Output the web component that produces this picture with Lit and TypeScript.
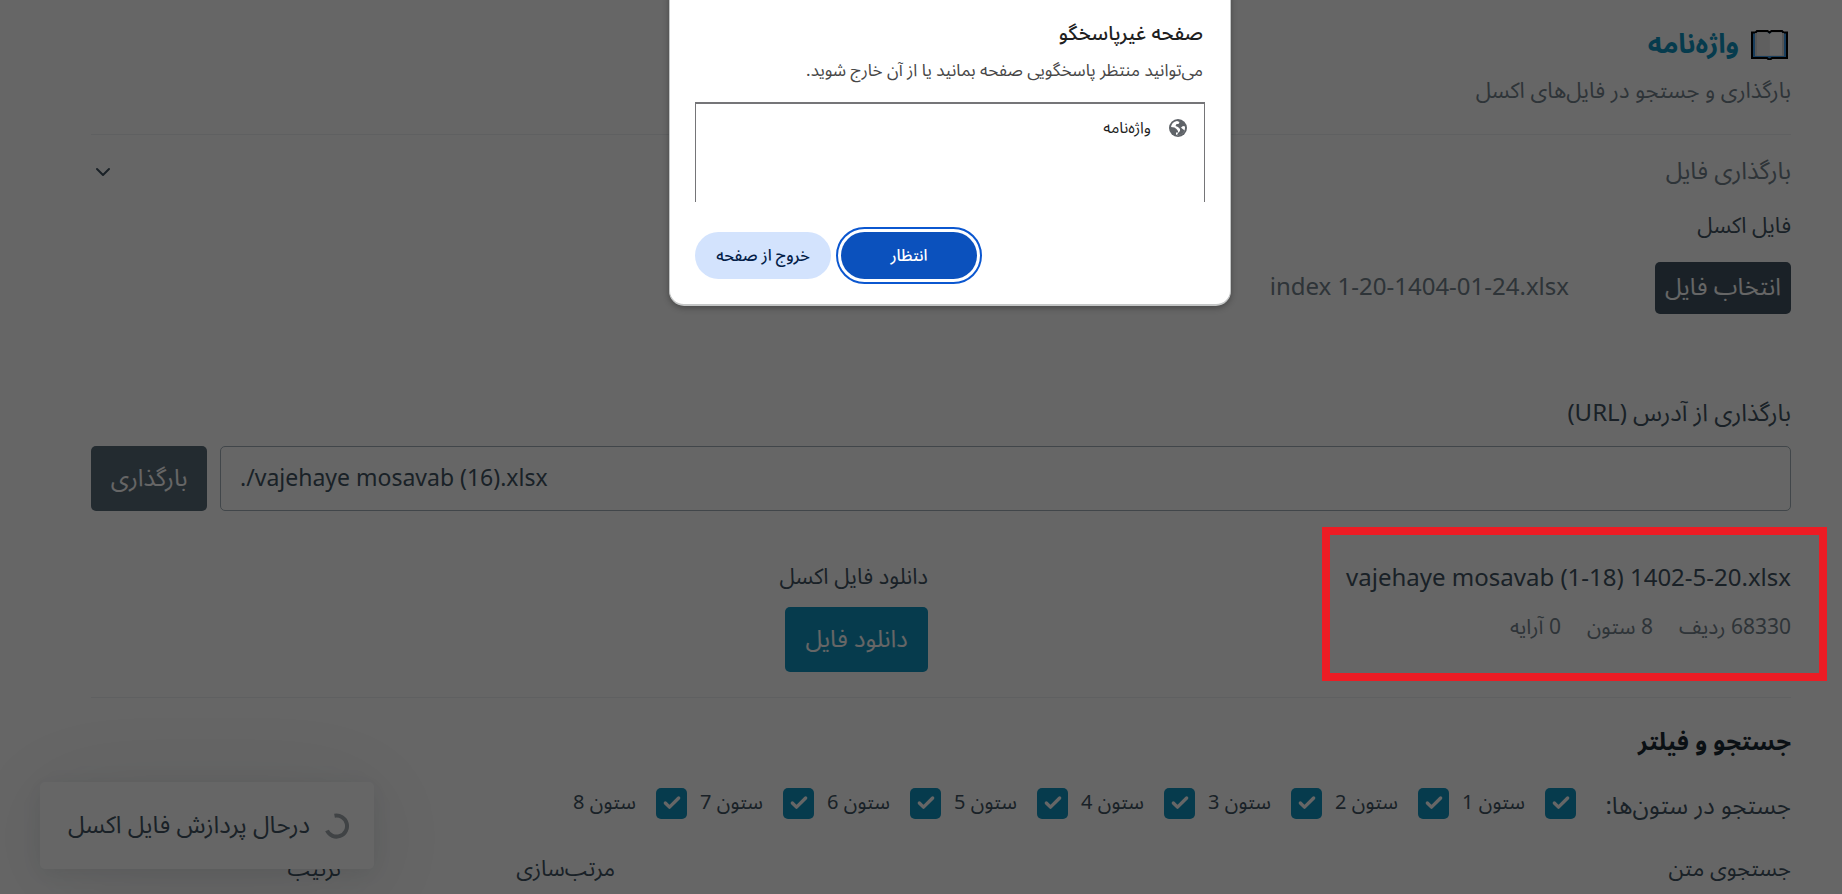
import { LitElement, html, css } from "lit";
import { customElement, state } from "lit/decorators.js";

@customElement("app-root")
export class AppRoot extends LitElement {
  @state() private columns = [1, 2, 3, 4, 5, 6, 7, 8];

  static styles = css`
    :host {
      display: block;
      position: relative;
      height: 100vh;
      overflow: hidden;
      background: #fff;
      color: #415462;
      font-family: "Noto Sans Arabic", "Vazirmatn", "Open Sans", "Noto Sans", "DejaVu Sans", sans-serif;
      font-size: 24px;
      line-height: 32px;
    }
    * { box-sizing: border-box; }
    h1, h2, p { margin: 0; }
    button, input { font: inherit; }
    main { padding: 25px 51px 0 91px; }
    .title {
      display: flex;
      align-items: center;
      gap: 12px;
      padding-right: 3px;
      color: #1095c1;
      font-size: 27px;
      line-height: 40px;
    }
    .book { width: 37px; height: 30px; }
    .tagline { margin-top: 10px; font-size: 22px; color: #73828c; }
    .rule { border: 0; border-top: 1px solid #edf0f3; margin: 27px 0 20px; }
    .summary {
      display: flex;
      justify-content: space-between;
      align-items: center;
      color: #73828c;
      padding: 1px 0;
    }
    .summary svg { width: 24px; height: 24px; color: #415462; }
    .label { display: block; font-size: 22px; }
    .file-label { margin-top: 21px; }
    .file { display: flex; align-items: center; gap: 86px; margin-top: 20px; color: #73828c; }
    .pick {
      height: 52px;
      width: 136px;
      padding: 0;
      border: 0;
      border-radius: 5px;
      background: #415462;
      color: #fff;
    }
    .url-label { display: block; margin-top: 84px; }
    .url { display: flex; gap: 13px; margin-top: 16px; }
    .url input {
      flex: 1;
      min-width: 0;
      height: 65px;
      padding: 0 19px;
      border: 1px solid #a2afb9;
      border-radius: 5px;
      background: #fff;
      color: #415462;
      font-size: 23px;
      direction: ltr;
      text-align: left;
    }
    .action {
      height: 65px;
      padding: 0 20px;
      border: 0;
      border-radius: 5px;
      background: #1095c1;
      color: #fff;
    }
    .load { width: 116px; padding: 0; background: #596b78; }
    .details { display: grid; grid-template-columns: 1fr 1fr; gap: 26px; margin-top: 50px; }
    .details .action { margin-top: 14px; width: 143px; padding: 0; }
    .info { padding-top: 2px; }
    .stats { display: flex; gap: 26px; margin-top: 16px; font-size: 21px; color: #73828c; }
    .rule.low { margin: 25px 0 24px; }
    .heading { color: #1b2832; font-size: 24px; line-height: 42px; }
    .checks { display: flex; align-items: center; margin-top: 19px; height: 40px; }
    .caption { width: 188px; margin-left: 27px; padding-top: 7px; white-space: nowrap; }
    .check {
      display: flex;
      align-items: center;
      gap: 20px;
      width: 127px;
      font-size: 20px;
      white-space: nowrap;
    }
    .check input {
      appearance: none;
      flex: none;
      width: 31px;
      height: 31px;
      margin: 0;
      border-radius: 5px;
      background: #1095c1
        url("data:image/svg+xml,%3Csvg xmlns='http://www.w3.org/2000/svg' viewBox='0 0 24 24' fill='none' stroke='white' stroke-width='4' stroke-linecap='round' stroke-linejoin='round'%3E%3Cpolyline points='20 6 9 17 4 12'/%3E%3C/svg%3E")
        center / 20px no-repeat;
    }
    .fields { display: grid; grid-template-columns: 1fr 250px 250px; gap: 24px; margin-top: 30px; }
    .toast {
      position: absolute;
      left: 40px;
      bottom: 25px;
      display: flex;
      align-items: center;
      gap: 14px;
      width: 334px;
      height: 87px;
      padding: 0 24px;
      border-radius: 5px;
      background: #fff;
      box-shadow: 0 12px 110px rgba(27, 40, 50, 0.1), 0 4px 24px rgba(27, 40, 50, 0.09);
      white-space: nowrap;
    }
    .spinner { width: 26px; height: 26px; flex: none; }
    .shade { position: absolute; inset: 0; background: rgba(0, 0, 0, 0.6); }
    .mark {
      position: absolute;
      right: 15px;
      top: 527px;
      width: 505px;
      height: 154px;
      border: 8px solid #ed1c24;
    }
    .dialog {
      position: absolute;
      left: calc(50% - 252px);
      right: auto;
      top: -16px;
      width: 562px;
      height: 322px;
      margin: 0;
      padding: 34px 25px 26px;
      border: 1px solid #c4c6c6;
      border-bottom-width: 2px;
      border-radius: 15px;
      background: #fff;
      color: #474747;
      font-size: 17px;
      line-height: 24px;
      box-shadow: 0 2px 6px rgba(0, 0, 0, 0.3);
    }
    .dialog h2 { color: #1f1f1f; font-size: 20px; line-height: 30px; font-weight: 500; }
    .dialog p { margin-top: 10px; }
    .dialog h2, .dialog p { padding-right: 2px; }
    .pages {
      display: flex;
      gap: 18px;
      height: 100px;
      margin: 19px 0 30px;
      padding: 12px 17px;
      border: 1px solid #757578;
      border-top: 2px solid #757578;
      border-bottom: 0;
      color: #1f1f1f;
      font-size: 16px;
    }
    .pages svg { width: 18px; height: 18px; margin-top: 3px; }
    .buttons { display: flex; justify-content: flex-end; gap: 10px; }
    .buttons button {
      width: 136px;
      height: 47px;
      padding: 0;
      border: 0;
      border-radius: 24px;
      background: #d3e3fd;
      color: #041e49;
      font-size: 16px;
      font-weight: 500;
    }
    .buttons .wait {
      background: #0b51bd;
      color: #fff;
      outline: 2px solid #0b57d0;
      outline-offset: 3px;
    }
  `;

  render() {
    return html`
      <main dir="rtl">
        <h1 class="title">
          <svg class="book" viewBox="0 0 37 30" aria-hidden="true">
            <path d="M1 2.5H4.500L6 1H16.500L18.500 2.500L20.500 1H31L32.500 2.500H36V28H21L19.500 29.300H17.500L16 28H1Z" fill="#3f9be8" stroke="#000" stroke-width="2"/>
            <path d="M4 3H6L7 2H16L18.500 4L21 2H30L31 3H33V26H4Z" fill="#d8d8d8"/>
            <path d="M6 2.500H16L18.500 4.500V25.500H6Z" fill="#ededed"/>
            <path d="M18.500 4.500L21 2.500H31V25.500H18.500Z" fill="#fff"/>
          </svg>
          <span>واژه‌نامه</span>
        </h1>
        <p class="tagline">بارگذاری و جستجو در فایل‌های اکسل</p>
        <hr class="rule" />
        <div class="summary">
          <span>بارگذاری فایل</span>
          <svg viewBox="0 0 24 24" fill="none" stroke="currentColor" stroke-width="2" stroke-linecap="round" stroke-linejoin="round" aria-hidden="true"><path d="M18 9L12 15L6 9"/></svg>
        </div>
        <label class="label file-label" for="pick">فایل اکسل</label>
        <div class="file">
          <button id="pick" class="pick">انتخاب فایل</button>
          <span dir="ltr">index 1-20-1404-01-24.xlsx</span>
        </div>
        <label class="url-label" for="url">بارگذاری از آدرس (URL)</label>
        <div class="url">
          <input id="url" type="text" .value=${"./vajehaye mosavab (16).xlsx"} />
          <button class="action load">بارگذاری</button>
        </div>
        <section class="details">
          <div class="info">
            <div><bdi dir="ltr">vajehaye mosavab (1-18) 1402-5-20.xlsx</bdi></div>
            <div class="stats"><span>68330 ردیف</span><span>8 ستون</span><span>0 آرایه</span></div>
          </div>
          <div>
            <label class="label" for="download">دانلود فایل اکسل</label>
            <button id="download" class="action">دانلود فایل</button>
          </div>
        </section>
        <hr class="rule low" />
        <h2 class="heading">جستجو و فیلتر</h2>
        <div class="checks">
          <span class="caption">جستجو در ستون‌ها:</span>
          ${this.columns.map(
            (n) => html`<label class="check"><input type="checkbox" checked /><span>ستون ${n}</span></label>`
          )}
        </div>
        <div class="fields">
          <span class="label">جستجوی متن</span>
          <span class="label">مرتب‌سازی</span>
          <span class="label">ترتیب</span>
        </div>
      </main>
      <div class="toast" dir="rtl" role="status">
        <svg class="spinner" viewBox="0 0 26 26" fill="none" aria-hidden="true">
          <path d="M10.500 2.800A10.500 10.500 0 1 1 3 17.500" stroke="#a0a7ac" stroke-width="4"/>
        </svg>
        <span>درحال پردازش فایل اکسل</span>
      </div>
      <div class="shade"></div>
      <div class="mark"></div>
      <dialog class="dialog" dir="rtl" open aria-labelledby="dialog-title">
        <h2 id="dialog-title">صفحه غیرپاسخگو</h2>
        <p>می‌توانید منتظر پاسخگویی صفحه بمانید یا از آن خارج شوید.</p>
        <div class="pages">
          <svg viewBox="0 0 18 18" aria-hidden="true">
            <circle cx="9" cy="9" r="9" fill="#5f6368"/>
            <path d="M2 8C2.300 5 4.500 2.600 8 2L10.500 3L9.500 5H7.500L6.500 7L9 8L11 10V12L9 14L8 16C11.500 16.500 14.500 14.500 15.700 11.500L13 9.500L12 8.500L14 7L16 7.500C16.400 12.500 13 16.200 8.500 16.200L7 15.500V13.500H9V12L7.500 10L5.500 8.500Z" fill="#fff"/>
          </svg>
          <span>واژه‌نامه</span>
        </div>
        <div class="buttons">
          <button class="wait">انتظار</button>
          <button>خروج از صفحه</button>
        </div>
      </dialog>
    `;
  }
}
